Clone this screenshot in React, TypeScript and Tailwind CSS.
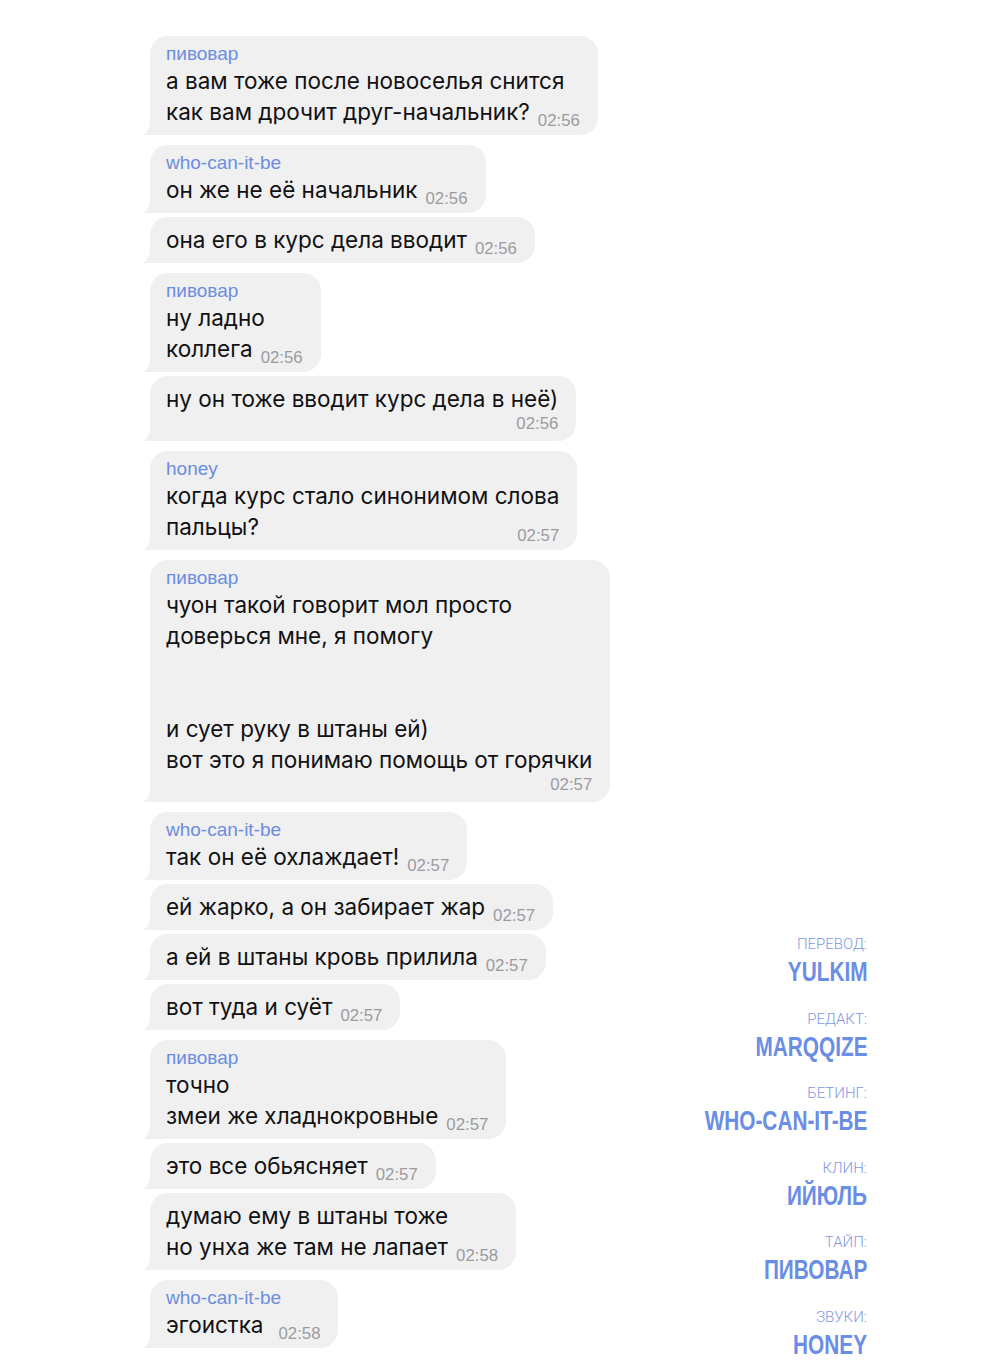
import React from "react";

type TimeMode = "inline" | "right" | "below";

interface Message {
  name?: string;
  lines: string[];
  time: string;
  mode?: TimeMode;
  first?: boolean;
  wideGap?: boolean;
}

const messages: Message[] = [
  { name: "пивовар", first: true, lines: ["а вам тоже после новоселья снится", "как вам дрочит друг-начальник?"], time: "02:56" },
  { name: "who-can-it-be", first: true, lines: ["он же не её начальник"], time: "02:56" },
  { lines: ["она его в курс дела вводит"], time: "02:56" },
  { name: "пивовар", first: true, lines: ["ну ладно", "коллега"], time: "02:56" },
  { lines: ["ну он тоже вводит курс дела в неё)"], time: "02:56", mode: "below" },
  { name: "honey", first: true, lines: ["когда курс стало синонимом слова", "пальцы?"], time: "02:57", mode: "right" },
  {
    name: "пивовар",
    first: true,
    lines: ["чуон такой говорит мол просто", "доверься мне, я помогу", "", "", "и сует руку в штаны ей)", "вот это я понимаю помощь от горячки"],
    time: "02:57",
    mode: "below",
  },
  { name: "who-can-it-be", first: true, lines: ["так он её охлаждает!"], time: "02:57" },
  { lines: ["ей жарко, а он забирает жар"], time: "02:57" },
  { lines: ["а ей в штаны кровь прилила"], time: "02:57" },
  { lines: ["вот туда и суёт"], time: "02:57" },
  { name: "пивовар", first: true, lines: ["точно", "змеи же хладнокровные"], time: "02:57" },
  { lines: ["это все обьясняет"], time: "02:57" },
  { lines: ["думаю ему в штаны тоже", "но унха же там не лапает"], time: "02:58" },
  { name: "who-can-it-be", first: true, lines: ["эгоистка"], time: "02:58", wideGap: true },
];

const credits = [
  { role: "ПЕРЕВОД:", who: "YULKIM" },
  { role: "РЕДАКТ:", who: "MARQQIZE" },
  { role: "БЕТИНГ:", who: "WHO-CAN-IT-BE" },
  { role: "КЛИН:", who: "ИЙЮЛЬ" },
  { role: "ТАЙП:", who: "ПИВОВАР" },
  { role: "ЗВУКИ:", who: "HONEY" },
];

const Time = ({ value }: { value: string }) => (
  <span className="font-['Liberation_Sans',Arial,sans-serif] text-[16.8px] leading-[19px] text-[#9b9b9f] whitespace-nowrap">
    {value}
  </span>
);

const Tail = () => (
  <svg className="absolute left-[-7px] bottom-0" width="14" height="16" viewBox="0 0 14 16">
    <path d="M7 0 C7 9 5 13.5 0 16 H14 V0 Z" fill="#f0f0f1" />
  </svg>
);

const Bubble = ({ msg }: { msg: Message }) => {
  const mode = msg.mode ?? "inline";
  const last = msg.lines.length - 1;

  return (
    <div className={`relative w-fit ${msg.first ? "mt-[10px]" : "mt-[4px]"} first:mt-0`}>
      <Tail />
      <div className="bg-[#f0f0f1] rounded-[18px] rounded-bl-none pl-4 pr-[18px] pt-[7px] pb-[8px]">
        {msg.name && (
          <div className="font-['Liberation_Sans',Arial,sans-serif] text-[19px] leading-[22px] text-[#6b8de0]">{msg.name}</div>
        )}
        {msg.lines.map((line, i) => {
          if (i === last && mode !== "below") {
            return (
              <div
                key={i}
                className={`flex items-end h-[31px] ${mode === "right" ? "justify-between gap-2" : msg.wideGap ? "gap-[15px]" : "gap-[8px]"}`}
              >
                <span className="text-[22.5px] leading-[31px] whitespace-nowrap">{line}</span>
                <span className="flex mb-[-3px]">
                  <Time value={msg.time} />
                </span>
              </div>
            );
          }
          return (
            <div key={i} className="text-[22.5px] leading-[31px] whitespace-nowrap h-[31px]">
              {line}
            </div>
          );
        })}
        {mode === "below" && (
          <div className="flex justify-end h-[19px]">
            <Time value={msg.time} />
          </div>
        )}
      </div>
    </div>
  );
};

export default function App() {
  return (
    <div className="w-[1000px] h-[1367px] bg-white flex pt-[36px] font-['Inter',sans-serif] text-[#111]">
      {/* chat column */}
      <div className="flex flex-col pl-[150px]">
        {messages.map((m, i) => (
          <Bubble key={i} msg={m} />
        ))}
      </div>

      {/* credits */}
      <div className="ml-auto mr-[133px] mt-[899px] flex flex-col items-end gap-[22.5px]">
        {credits.map((c) => (
          <div key={c.role} className="flex flex-col items-end">
            <div className="font-['Roboto',sans-serif] font-light text-[15px] leading-[18px] text-[#7f98e2]">{c.role}</div>
            <div className="mt-[4px] font-['Liberation_Sans',Arial,sans-serif] font-bold text-[27px] leading-[30px] text-[#6a8de6] scale-x-[0.77] origin-right whitespace-nowrap">
              {c.who}
            </div>
          </div>
        ))}
      </div>
    </div>
  );
}
